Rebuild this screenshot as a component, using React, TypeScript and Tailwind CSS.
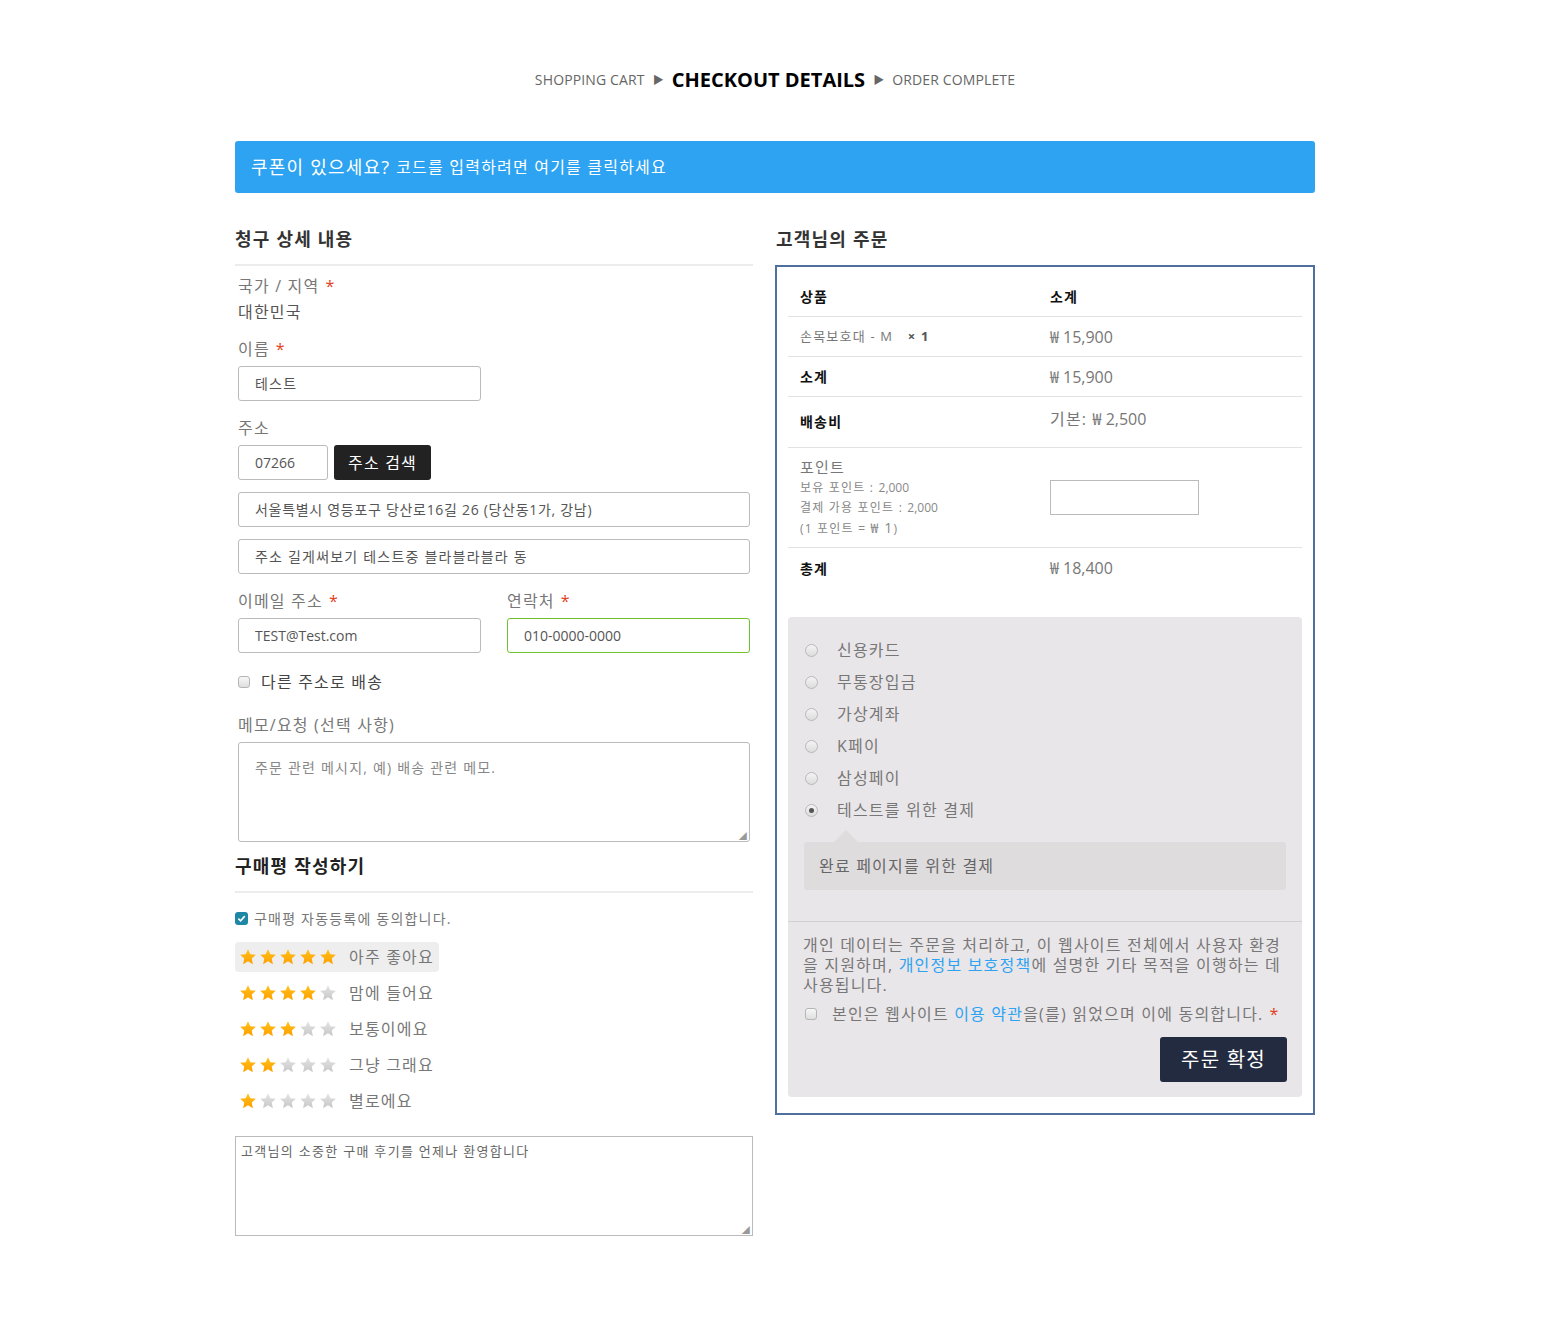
import React from "react";

const font = "font-['Open_Sans','Noto_Sans_CJK_KR',sans-serif]";

const Req = () => <span className="text-[#e2401c] ml-[6px]">*</span>;

const Star = ({ on, id }: { on: boolean; id: string }) => (
  <svg width="18" height="18" viewBox="0 0 24 24" className="mr-[2px]">
    <defs>
      <linearGradient id={id} x1="0" y1="0" x2="0" y2="1">
        <stop offset="0" stopColor={on ? "#ffc21a" : "#e4e4e4"} />
        <stop offset="1" stopColor={on ? "#ff9f00" : "#c8c8c8"} />
      </linearGradient>
    </defs>
    <polygon
      points="12,1.5 15.1,8.3 22.5,9.1 17,14.1 18.5,21.5 12,17.8 5.5,21.5 7,14.1 1.5,9.1 8.9,8.3"
      fill={`url(#${id})`}
    />
  </svg>
);

const Radio = ({ checked }: { checked?: boolean }) => (
  <span className="w-[13px] h-[13px] rounded-full border border-[#b9b9b9] bg-gradient-to-b from-[#f4f4f4] to-[#dcdcdc] flex items-center justify-center">
    {checked && <span className="w-[5px] h-[5px] rounded-full bg-[#555]" />}
  </span>
);

const Check = () => (
  <span className="w-[12px] h-[12px] rounded-[3px] border border-[#b5b5b5] bg-gradient-to-b from-[#f7f7f7] to-[#dedede] inline-block" />
);

// border colour is added per field so the green one can override it
const inputCls =
  "h-[35px] border rounded-[3px] bg-white px-[16px] flex items-center text-[14px] text-[#555]";

const reviews = [
  { n: 5, t: "아주 좋아요" },
  { n: 4, t: "맘에 들어요" },
  { n: 3, t: "보통이에요" },
  { n: 2, t: "그냥 그래요" },
  { n: 1, t: "별로에요" },
];

const payments = ["신용카드", "무통장입금", "가상계좌", "K페이", "삼성페이", "테스트를 위한 결제"];

export default function App() {
  return (
    <div className={`${font} tracking-[0.075em] bg-white min-h-[1323px] pb-[80px]`}>
      {/* breadcrumb */}
      <div className="pt-[64px] h-[96px] flex items-center justify-center gap-[8px] leading-[30px] tracking-normal">
        <span className="text-[14px] text-[#666] uppercase tracking-[0.01em]">Shopping Cart</span>
        <span className="text-[11px] text-[#666]">▶</span>
        <span className="text-[20px] font-bold text-black uppercase">Checkout Details</span>
        <span className="text-[11px] text-[#666]">▶</span>
        <span className="text-[14px] text-[#666] uppercase tracking-[0.01em]">Order Complete</span>
      </div>

      <div className="w-[1080px] mx-auto">
        <div className="mt-[45px] h-[52px] bg-[#2ea3f2] rounded-[3px] pl-[16px] flex items-center text-white">
          <span className="text-[18px]">쿠폰이 있으세요?</span>
          <span className="text-[16px] ml-[6px]">코드를 입력하려면 여기를 클릭하세요</span>
        </div>

        <div className="flex justify-between items-start">
          {/* left column */}
          <div className="w-[518px]">
            <div className="mt-[32px] pb-[11px] border-b-2 border-[#ececec]">
              <h3 className="h-[28px] leading-[28px] text-[18px] font-bold text-[#333]">청구 상세 내용</h3>
            </div>
            <div className="pl-[3px] text-[16px] text-[#777]">
              <div className="mt-[8px] leading-[24px]">
                국가 / 지역<Req />
              </div>
              <div className="mt-[2px] leading-[24px] text-[#555]">대한민국</div>
              <div className="mt-[13px] leading-[24px]">
                이름<Req />
              </div>
              <div className={`${inputCls} border-[#bbb] mt-[5px] w-[243px]`}>테스트</div>
              <div className="mt-[15px] leading-[24px]">주소</div>
              <div className="mt-[5px] flex gap-[6px]">
                <div className={`${inputCls} border-[#bbb] w-[90px] tracking-normal`}>07266</div>
                <div className="h-[35px] w-[97px] bg-[#222] rounded-[3px] text-white text-[16px] flex items-center justify-center">
                  주소 검색
                </div>
              </div>
              <div className={`${inputCls} border-[#bbb] mt-[12px] w-[512px] tracking-[0.05em]`}>
                서울특별시 영등포구 당산로16길 26 (당산동1가, 강남)
              </div>
              <div className={`${inputCls} border-[#bbb] mt-[12px] w-[512px]`}>주소 길게써보기 테스트중 블라블라블라 동</div>
              <div className="mt-[15px] flex gap-[26px]">
                <div className="w-[243px]">
                  <div className="leading-[24px]">
                    이메일 주소<Req />
                  </div>
                  <div className={`${inputCls} border-[#bbb] mt-[5px] tracking-normal`}>TEST@Test.com</div>
                </div>
                <div className="w-[243px]">
                  <div className="leading-[24px]">
                    연락처<Req />
                  </div>
                  <div className={`${inputCls} border-[#6dc22e] mt-[5px] tracking-normal`}>010-0000-0000</div>
                </div>
              </div>
              <div className="mt-[17px] h-[24px] flex items-center gap-[11px] text-[#444]">
                <Check />
                <span>다른 주소로 배송</span>
              </div>
              <div className="mt-[19px] leading-[24px]">메모/요청 (선택 사항)</div>
              <div className="mt-[5px] relative h-[100px] w-[512px] border border-[#bbb] rounded-[3px] px-[16px] pt-[14px] text-[14px] text-[#888]">
                주문 관련 메시지, 예) 배송 관련 메모.
                <span className="absolute right-[1px] bottom-[1px] text-[8px] leading-none text-[#999]">◢</span>
              </div>
            </div>

            <div className="mt-[10px] pb-[11px] border-b-2 border-[#ececec]">
              <h3 className="h-[28px] leading-[28px] text-[18px] font-bold text-[#222]">구매평 작성하기</h3>
            </div>
            <div className="mt-[15px] h-[20px] flex items-center gap-[6px] text-[14px] text-[#777]">
              <span className="w-[13px] h-[13px] rounded-[3px] bg-[#1f87a6] flex items-center justify-center">
                <svg width="9" height="9" viewBox="0 0 10 10">
                  <path d="M1.5 5.2 L4 7.6 L8.6 2.4" stroke="white" strokeWidth="1.8" fill="none" />
                </svg>
              </span>
              구매평 자동등록에 동의합니다.
            </div>
            <div className="mt-[14px]">
              {reviews.map((r, i) => (
                <div
                  key={r.n}
                  className={`h-[30px] mb-[6px] flex items-center pl-[4px] pr-[5px] rounded-[4px] w-fit ${
                    i === 0 ? "bg-[#eeeeee]" : ""
                  }`}
                >
                  {[1, 2, 3, 4, 5].map((s) => (
                    <Star key={s} on={s <= r.n} id={`st${r.n}-${s}`} />
                  ))}
                  <span className="ml-[10px] text-[16px] text-[#777]">{r.t}</span>
                </div>
              ))}
            </div>
            <div className="mt-[20px] relative h-[100px] border border-[#bbb] px-[5px] pt-[5px] text-[13px] text-[#666] tracking-[0.1em]">
              고객님의 소중한 구매 후기를 언제나 환영합니다
              <span className="absolute right-[1px] bottom-[1px] text-[8px] leading-none text-[#999]">◢</span>
            </div>
          </div>

          {/* right column */}
          <div className="w-[540px]">
            <h3 className="mt-[32px] h-[28px] leading-[28px] text-[18px] font-bold text-[#333] pl-[1px]">고객님의 주문</h3>
            <div className="mt-[12px] border-2 border-[#4f6f9f] px-[11px] pt-[10px] pb-[16px]">
              <div className="text-[16px] text-[#777]">
                <div className="grid grid-cols-[262px_1fr] h-[40px] items-center border-b border-[#e2e2e2] text-[14px] font-bold text-[#111]">
                  <span className="pl-[12px]">상품</span>
                  <span>소계</span>
                </div>
                <div className="grid grid-cols-[262px_1fr] h-[40px] items-center border-b border-[#e2e2e2]">
                  <span className="pl-[12px] text-[13px]">
                    손목보호대 - M <span className="ml-[10px] font-bold text-[#555]">× 1</span>
                  </span>
                  <span className="tracking-normal">₩ 15,900</span>
                </div>
                <div className="grid grid-cols-[262px_1fr] h-[40px] items-center border-b border-[#e2e2e2]">
                  <span className="pl-[12px] text-[14px] font-bold text-[#111]">소계</span>
                  <span className="tracking-normal">₩ 15,900</span>
                </div>
                <div className="grid grid-cols-[262px_1fr] h-[51px] border-b border-[#e2e2e2]">
                  <span className="pl-[12px] pt-[14px] text-[14px] font-bold text-[#111]">배송비</span>
                  <span className="pt-[10px]">
                    기본: <span className="tracking-normal">₩ 2,500</span>
                  </span>
                </div>
                <div className="grid grid-cols-[262px_1fr] h-[100px] items-center border-b border-[#e2e2e2]">
                  <div className="pl-[12px] text-[12px] leading-[20px] text-[#888]">
                    <div className="text-[15px] text-[#777] leading-[22px]">포인트</div>
                    <div>
                      보유 포인트 : <span className="tracking-normal">2,000</span>
                    </div>
                    <div>
                      결제 가용 포인트 : <span className="tracking-normal">2,000</span>
                    </div>
                    <div>
                      (1 포인트 = <span className="text-[14px]">₩ 1</span>)
                    </div>
                  </div>
                  <div className="h-[35px] w-[149px] border border-[#bbb] bg-white" />
                </div>
                <div className="grid grid-cols-[262px_1fr] h-[40px] items-center">
                  <span className="pl-[12px] text-[14px] font-bold text-[#111]">총계</span>
                  <span className="tracking-normal">₩ 18,400</span>
                </div>
              </div>

              <div className="mt-[29px] bg-[#e9e6e9] rounded-[4px] pb-[15px]">
                <div className="px-[16px] pt-[17px]">
                  {payments.map((p, i) => (
                    <div key={p} className="h-[32px] flex items-center text-[16px] text-[#777]">
                      <span className="w-[33px] pl-[1px]">
                        <Radio checked={i === payments.length - 1} />
                      </span>
                      {p}
                    </div>
                  ))}
                  <div className="mt-[4px] pl-[30px] h-[12px] flex items-end">
                    <span className="w-0 h-0 border-l-[12px] border-r-[12px] border-b-[12px] border-l-transparent border-r-transparent border-b-[#dfdcde]" />
                  </div>
                  <div className="h-[48px] bg-[#dfdcde] rounded-[3px] pl-[15px] flex items-center text-[16px] text-[#666]">
                    완료 페이지를 위한 결제
                  </div>
                </div>
                <div className="mt-[31px] border-t border-[#d3ced2] px-[15px] pt-[13px]">
                  <p className="text-[16px] leading-[20px] text-[#777]">
                    <span className="block whitespace-nowrap">개인 데이터는 주문을 처리하고, 이 웹사이트 전체에서 사용자 환경</span>
                    <span className="block whitespace-nowrap">
                      을 지원하며, <span className="text-[#2ea3f2]">개인정보 보호정책</span>에 설명한 기타 목적을 이행하는 데
                    </span>
                    <span className="block">사용됩니다.</span>
                  </p>
                  <div className="mt-[9px] h-[20px] flex items-center text-[16px] text-[#777] whitespace-nowrap">
                    <span className="ml-[2px] mr-[15px] flex">
                      <Check />
                    </span>
                    본인은 웹사이트&nbsp;<span className="text-[#2ea3f2]">이용 약관</span>을(를) 읽었으며 이에 동의합니다.
                    <Req />
                  </div>
                  <div className="mt-[13px] flex justify-end">
                    <div className="h-[45px] w-[127px] bg-[#232b40] rounded-[3px] text-white text-[20px] flex items-center justify-center">
                      주문 확정
                    </div>
                  </div>
                </div>
              </div>
            </div>
          </div>
        </div>
      </div>
    </div>
  );
}
